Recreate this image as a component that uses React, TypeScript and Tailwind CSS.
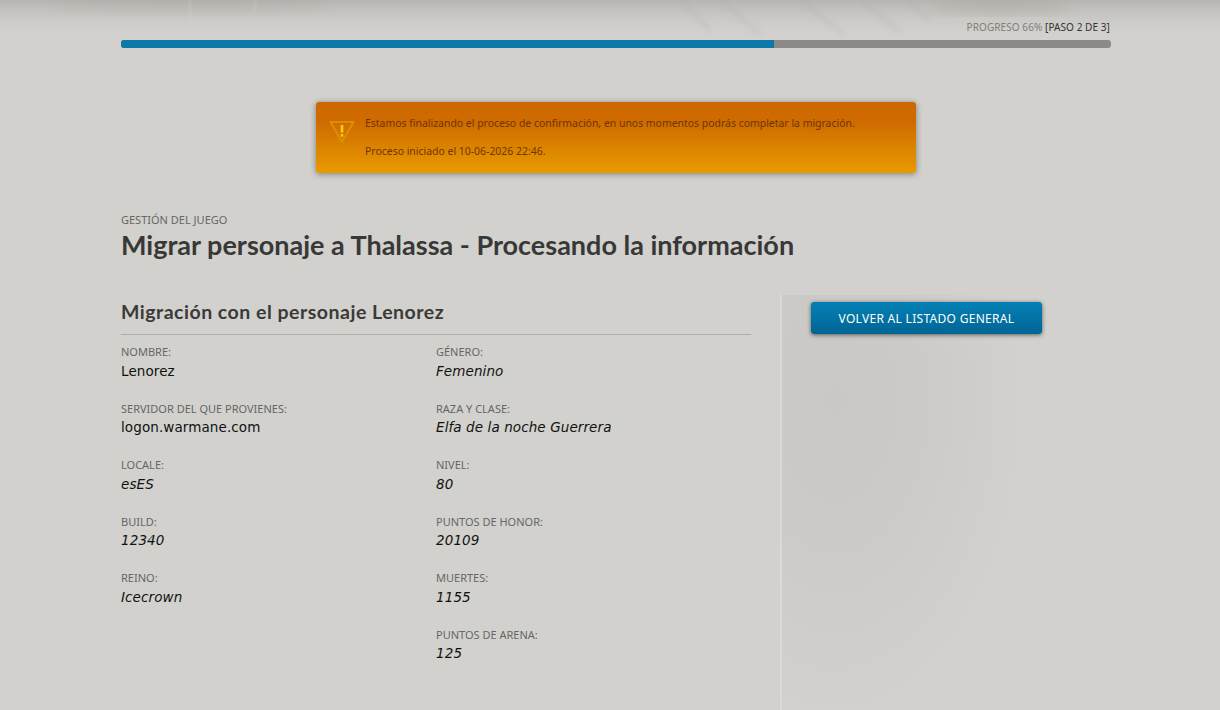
const leftFields = [
  { label: "NOMBRE:", value: "Lenorez" },
  { label: "SERVIDOR DEL QUE PROVIENES:", value: "logon.warmane.com" },
  { label: "LOCALE:", value: "esES", italic: true },
  { label: "BUILD:", value: "12340", italic: true },
  { label: "REINO:", value: "Icecrown", italic: true },
];

const rightFields = [
  { label: "GÉNERO:", value: "Femenino", italic: true },
  { label: "RAZA Y CLASE:", value: "Elfa de la noche Guerrera", italic: true },
  { label: "NIVEL:", value: "80", italic: true },
  { label: "PUNTOS DE HONOR:", value: "20109", italic: true },
  { label: "MUERTES:", value: "1155", italic: true },
  { label: "PUNTOS DE ARENA:", value: "125", italic: true },
];

function Field({ label, value, italic }: { label: string; value: string; italic?: boolean }) {
  return (
    <div className="h-[56.5px]">
      <div className="h-[16.5px] text-[11px] leading-[17px] text-[#666]">{label}</div>
      <div className={`h-[22px] text-[13.5px] leading-[22px] tracking-[0.1px] text-[#111] font-['DejaVu_Sans',sans-serif] ${italic ? "italic" : ""}`}>
        {value}
      </div>
    </div>
  );
}

function Texture() {
  return (
    <svg className="absolute left-0 top-0 h-[60px] w-[1220px]" viewBox="0 0 1220 60" aria-hidden="true">
      <defs>
        <filter id="b1"><feGaussianBlur stdDeviation="2.5" /></filter>
        <filter id="b2"><feGaussianBlur stdDeviation="8" /></filter>
        <filter id="b3"><feGaussianBlur stdDeviation="1" /></filter>
        <linearGradient id="fade" x1="0" y1="0" x2="0" y2="1">
          <stop offset="0" stopColor="#b6b5b1" />
          <stop offset="1" stopColor="#d2d1cd" stopOpacity="0" />
        </linearGradient>
      </defs>
      <rect width="1220" height="40" fill="url(#fade)" />
      <g filter="url(#b2)" fill="#a8a7a3" opacity="0.45">
        <ellipse cx="190" cy="0" rx="140" ry="8" />
        <ellipse cx="1000" cy="4" rx="70" ry="10" />
      </g>
      <g filter="url(#b1)" stroke="#aaa9a5" strokeWidth="4" opacity="0.25" fill="none">
        <path d="M680 0 L710 30M720 0 L760 34M800 0 L845 36M860 0 L900 32M905 0 L930 20" />
      </g>
      <path d="M190 0 V26M255 0 V12" stroke="#dddcd8" strokeWidth="1.5" opacity="0.35" filter="url(#b3)" />
    </svg>
  );
}

export default function App() {
  return (
    <div className="relative h-[710px] w-full overflow-hidden bg-[#d2d1cd] font-['Noto_Sans','DejaVu_Sans',sans-serif]">
      <Texture />
      <div className="relative ml-[121px] w-[990px]">
        <div className="pt-[20px] pr-[1px] text-right text-[10px] leading-[15px] tracking-[0.08px]">
          <span className="text-[#807f7b]">PROGRESO 66%</span> <span className="text-[#333]">[PASO 2 DE 3]</span>
        </div>
        <div className="mt-[5px] h-[8px] overflow-hidden rounded-[3px] bg-[#8b8a87]">
          <div className="h-full w-[653px] bg-[#0a79a8]" />
        </div>

        <div className="ml-[195px] mt-[54px] flex h-[71px] w-[600px] rounded-[3px] bg-[linear-gradient(#cd6700_0,#cf6c00_30%,#e89b00_100%)] pl-[13px] shadow-[0_1px_6px_rgba(0,0,0,0.4)]">
          <svg className="mt-[18px] h-[24px] w-[26px] shrink-0" viewBox="0 0 26 24" aria-hidden="true">
            <path d="M1.5 2 H24.5 L13 22 Z" fill="none" stroke="#e08d00" strokeWidth="2" strokeLinejoin="round" />
            <rect x="11.7" y="5" width="2.6" height="7.5" fill="#f7d100" />
            <rect x="11.7" y="14" width="2.6" height="2.6" fill="#f7d100" />
          </svg>
          <div className="ml-[10px] pt-[14px] text-[10.45px] leading-[14px] text-[#6e3600]">
            <p>Estamos finalizando el proceso de confirmación, en unos momentos podrás completar la migración.</p>
            <p className="mt-[14px]">Proceso iniciado el 10-06-2026 22:46.</p>
          </div>
        </div>

        <div className="mt-[39px] text-[11px] leading-[16px] text-[#666]">GESTIÓN DEL JUEGO</div>
        <h1 className="text-[27px] font-bold leading-[34px] text-[#383838] font-['Lato',sans-serif]">
          Migrar personaje a Thalassa - Procesando la información
        </h1>

        <div className="mt-[37px] w-[630px]">
          <h2 className="h-[36px] border-b border-[#aeada9] text-[19.5px] font-bold leading-[26px] tracking-[0.5px] text-[#3a3a3a] font-['Lato',sans-serif]">
            Migración con el personaje Lenorez
          </h2>
          <div className="mt-[8px] grid grid-cols-2">
            <div>
              {leftFields.map((f) => (
                <Field key={f.label} {...f} />
              ))}
            </div>
            <div>
              {rightFields.map((f) => (
                <Field key={f.label} {...f} />
              ))}
            </div>
          </div>
        </div>
      </div>

      <div className="absolute bottom-0 left-[780px] top-[295px] w-[270px] border-l-2 border-[#dadad6] bg-[radial-gradient(ellipse_190px_320px_at_20%_25%,#c9c8c4_0,#cbcac6_40%,#cfceca_75%,#d2d1cd_100%)]">
        <button className="ml-[29px] mt-[7px] h-[32px] w-[231px] rounded-[3px] bg-[linear-gradient(#0580b4,#006594)] pt-[1px] text-[12px] tracking-[0.3px] text-white shadow-[0_1px_4px_rgba(0,0,0,0.55)]">
          VOLVER AL LISTADO GENERAL
        </button>
      </div>
    </div>
  );
}
